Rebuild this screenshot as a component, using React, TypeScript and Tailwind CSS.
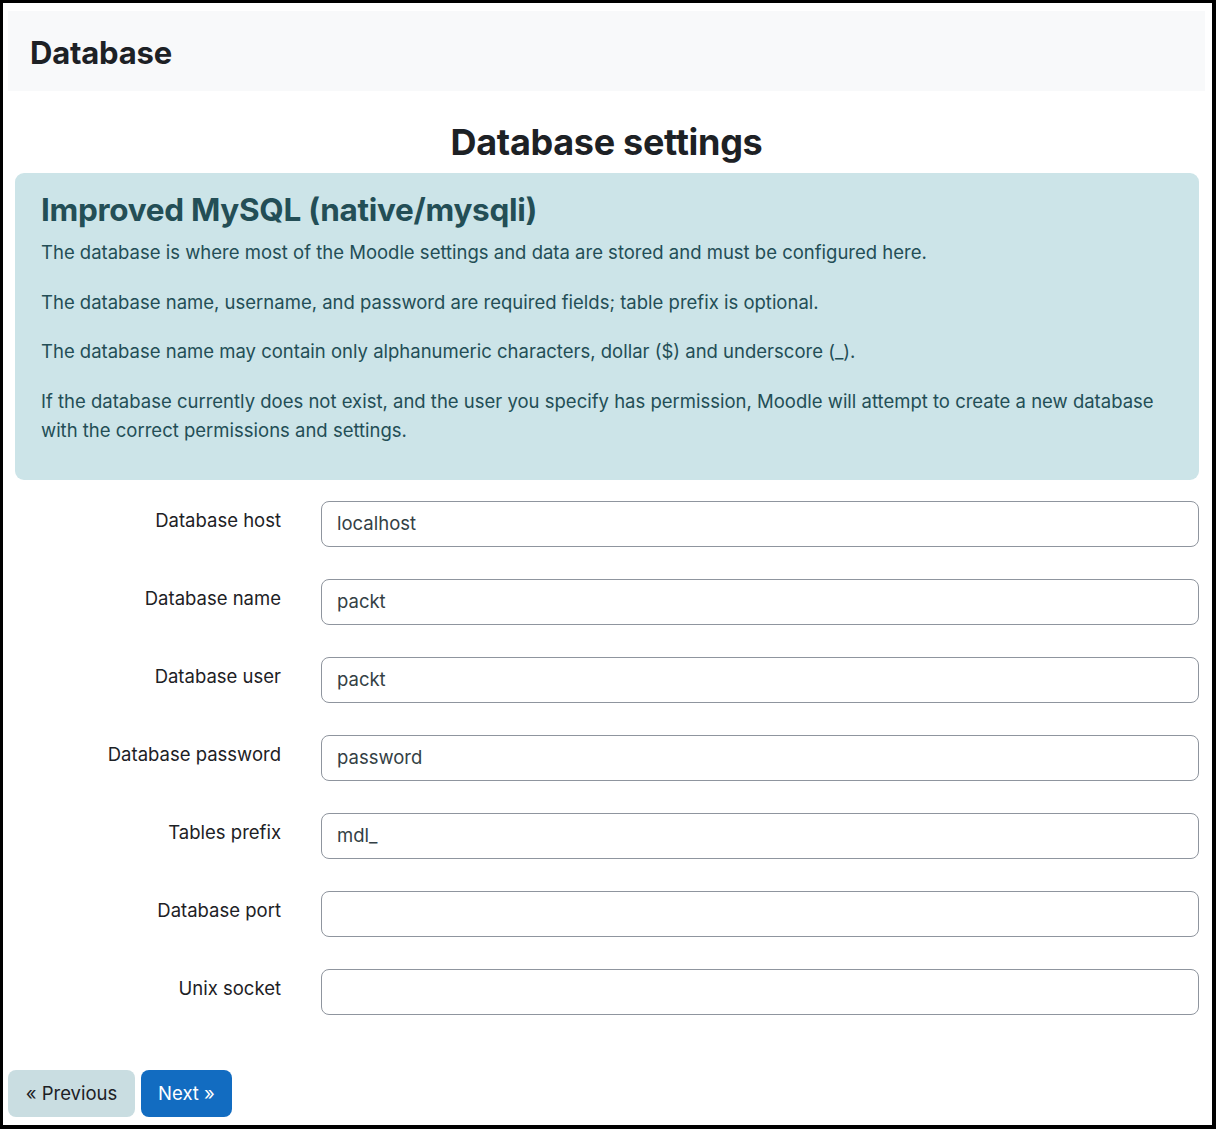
import React from "react";

const fields: { label: string; value: string }[] = [
  { label: "Database host", value: "localhost" },
  { label: "Database name", value: "packt" },
  { label: "Database user", value: "packt" },
  { label: "Database password", value: "password" },
  { label: "Tables prefix", value: "mdl_" },
  { label: "Database port", value: "" },
  { label: "Unix socket", value: "" },
];

export default function App() {
  return (
    <div
      className="w-[1216px] h-[1129px] bg-white border-l-[3px] border-t-[3px] border-r-4 border-b-4 border-black overflow-hidden text-[#1d2125]"
      style={{ fontFamily: "Inter, 'Noto Sans', sans-serif" }}
    >
      <div className="pl-[5px] pr-[7px] pt-[8px]">
        <div className="h-[80px] bg-[#f8f9fa] flex items-center pl-[22px] pt-[3px]">
          <h1 className="text-[31px] font-bold leading-none tracking-[-0.2px] text-[#1d2125]">Database</h1>
        </div>
        <h2 className="text-center text-[36px] font-bold leading-none mt-[33px] mb-[13px] tracking-[-0.3px] text-[#1d2125]">
          Database settings
        </h2>
        <div className="ml-[7px] mr-[6px] rounded-[9px] bg-[#cce4e8] text-[#234e56] pl-[26px] pr-[24px] pt-[18px] pb-[22px]">
          <h3 className="text-[31.5px] font-bold leading-[38px] tracking-[-0.3px] mb-[9px]">Improved MySQL (native/mysqli)</h3>
          <p className="text-[18.5px] leading-[29px] mb-[20.5px]">
            The database is where most of the Moodle settings and data are stored and must be configured here.
          </p>
          <p className="text-[18.5px] leading-[29px] mb-[20.5px]">
            The database name, username, and password are required fields; table prefix is optional.
          </p>
          <p className="text-[18.5px] leading-[29px] mb-[20.5px]">
            The database name may contain only alphanumeric characters, dollar ($) and underscore (_).
          </p>
          <p className="text-[18.5px] leading-[29px] mb-[13.5px]">
            If the database currently does not exist, and the user you specify has permission, Moodle will attempt to create a new database with the correct permissions and settings.
          </p>
        </div>
        <div className="mt-[21px] flex flex-col gap-[32px]">
          {fields.map((f) => (
            <div key={f.label} className="flex items-start">
              <label className="w-[273px] shrink-0 text-right text-[18.5px] leading-[27px] pt-[6px] text-[#1d2125]">
                {f.label}
              </label>
              <div className="ml-[40px] w-[878px] h-[46px] rounded-[8px] border border-[#8f959e] bg-white flex items-center pl-[15px] pr-[16px] text-[18.5px] text-[#343f45]">
                {f.value}
              </div>
            </div>
          ))}
        </div>
        <div className="mt-[55px] flex gap-[6px]">
          <button className="h-[47px] w-[127px] rounded-[8px] bg-[#c9dde1] text-[18.5px] text-[#1d2125] flex items-center justify-center">
            « Previous
          </button>
          <button className="h-[47px] w-[91px] rounded-[8px] bg-[#126cc1] text-[18.5px] text-white flex items-center justify-center">
            Next »
          </button>
        </div>
      </div>
    </div>
  );
}
